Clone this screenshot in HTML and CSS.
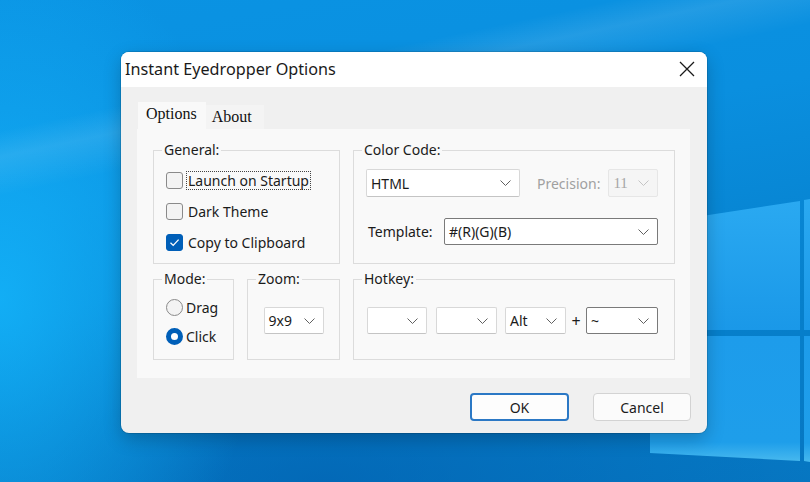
FILE: index.html
```html
<!DOCTYPE html>
<html lang="en">
<head>
    <meta charset="UTF-8">
    <title>Instant Eyedropper Options</title>
    <link rel="stylesheet" href="styles.css">
</head>
<body>
    <div class="desktop">
        <!-- wallpaper logo panes -->
        <svg class="wallpaper-logo" width="810" height="482" viewBox="0 0 810 482">
            <defs>
                <linearGradient id="pane" x1="0" y1="0" x2="0" y2="1">
                    <stop offset="0" stop-color="#2aa9f1"/>
                    <stop offset="1" stop-color="#1a98e8"/>
                </linearGradient>
                <linearGradient id="paneLow" x1="0" y1="0" x2="0" y2="1">
                    <stop offset="0" stop-color="#1d9ceb"/>
                    <stop offset="0.85" stop-color="#1e9eea"/>
                    <stop offset="1" stop-color="#46b8ee"/>
                </linearGradient>
            </defs>
            <polygon points="650,224 800,201 800,330 650,330" fill="url(#pane)"/>
            <polygon points="804,200 810,199 810,330 804,330" fill="url(#pane)"/>
            <polygon points="650,336 800,336 800,461 650,453" fill="url(#paneLow)"/>
            <polygon points="804,336 810,336 810,462 804,461" fill="url(#paneLow)"/>
        </svg>

        <div class="dialog">
            <div class="titlebar">
                <span class="title">Instant Eyedropper Options</span>
                <span class="close">
                    <svg width="16" height="16" viewBox="0 0 16 16">
                        <path d="M1 1 L15 15 M15 1 L1 15" stroke="#1a1a1a" stroke-width="1.3" fill="none"/>
                    </svg>
                </span>
            </div>

            <div class="dialog-body">
                <div class="tabs">
                    <div class="tab active">Options</div>
                    <div class="tab">About</div>
                </div>

                <div class="tab-panel">
                    <fieldset class="group general">
                        <legend>General:</legend>
                        <div class="group-content checks">
                            <div class="check-row">
                                <span class="checkbox"></span>
                                <span class="check-label focused">Launch on Startup</span>
                            </div>
                            <div class="check-row">
                                <span class="checkbox"></span>
                                <span class="check-label">Dark Theme</span>
                            </div>
                            <div class="check-row">
                                <span class="checkbox checked">
                                    <svg width="11" height="11" viewBox="0 0 11 11">
                                        <path d="M1.5 5.8 L4.2 8.4 L9.6 2.6" stroke="#fff" stroke-width="1.3" fill="none"/>
                                    </svg>
                                </span>
                                <span class="check-label">Copy to Clipboard</span>
                            </div>
                        </div>
                    </fieldset>

                    <fieldset class="group color-code">
                        <legend>Color Code:</legend>
                        <div class="group-content">
                            <div class="field-row">
                                <div class="select code-select">
                                    <span>HTML</span>
                                    <svg class="chevron" width="11" height="6" viewBox="0 0 11 6"><path d="M0.5 0.5 L5.5 5.5 L10.5 0.5" stroke="#606060" fill="none"/></svg>
                                </div>
                                <span class="muted precision-label">Precision:</span>
                                <div class="select disabled precision-select">
                                    <span>11</span>
                                    <svg class="chevron" width="11" height="6" viewBox="0 0 11 6"><path d="M0.5 0.5 L5.5 5.5 L10.5 0.5" stroke="#c4c4c4" fill="none"/></svg>
                                </div>
                            </div>
                            <div class="field-row template-row">
                                <span class="template-label">Template:</span>
                                <div class="select editable template-select">
                                    <span>#(R)(G)(B)</span>
                                    <svg class="chevron" width="11" height="6" viewBox="0 0 11 6"><path d="M0.5 0.5 L5.5 5.5 L10.5 0.5" stroke="#606060" fill="none"/></svg>
                                </div>
                            </div>
                        </div>
                    </fieldset>

                    <fieldset class="group mode">
                        <legend>Mode:</legend>
                        <div class="group-content radios">
                            <div class="radio-row">
                                <span class="radio"></span>
                                <span>Drag</span>
                            </div>
                            <div class="radio-row">
                                <span class="radio checked"></span>
                                <span>Click</span>
                            </div>
                        </div>
                    </fieldset>

                    <fieldset class="group zoom">
                        <legend>Zoom:</legend>
                        <div class="group-content zoom-content">
                            <div class="select small zoom-select">
                                <span>9x9</span>
                                <svg class="chevron" width="11" height="6" viewBox="0 0 11 6"><path d="M0.5 0.5 L5.5 5.5 L10.5 0.5" stroke="#606060" fill="none"/></svg>
                            </div>
                        </div>
                    </fieldset>

                    <fieldset class="group hotkey">
                        <legend>Hotkey:</legend>
                        <div class="group-content hotkey-row">
                            <div class="select small key-a">
                                <span></span>
                                <svg class="chevron" width="11" height="6" viewBox="0 0 11 6"><path d="M0.5 0.5 L5.5 5.5 L10.5 0.5" stroke="#606060" fill="none"/></svg>
                            </div>
                            <div class="select small key-b">
                                <span></span>
                                <svg class="chevron" width="11" height="6" viewBox="0 0 11 6"><path d="M0.5 0.5 L5.5 5.5 L10.5 0.5" stroke="#606060" fill="none"/></svg>
                            </div>
                            <div class="select small key-c">
                                <span>Alt</span>
                                <svg class="chevron" width="11" height="6" viewBox="0 0 11 6"><path d="M0.5 0.5 L5.5 5.5 L10.5 0.5" stroke="#606060" fill="none"/></svg>
                            </div>
                            <span class="plus">+</span>
                            <div class="select small editable key-d">
                                <span>~</span>
                                <svg class="chevron" width="11" height="6" viewBox="0 0 11 6"><path d="M0.5 0.5 L5.5 5.5 L10.5 0.5" stroke="#606060" fill="none"/></svg>
                            </div>
                        </div>
                    </fieldset>
                </div>

                <div class="buttons">
                    <button class="btn default">OK</button>
                    <button class="btn">Cancel</button>
                </div>
            </div>
        </div>
    </div>
</body>
</html>
```

FILE: styles.css
```css
html, body {
    margin: 0;
    padding: 0;
}
body {
    width: 810px;
    height: 482px;
    overflow: hidden;
    font-family: "Noto Sans", "Open Sans", sans-serif;
    font-size: 14px;
    color: #1b1b1b;
}
.desktop {
    position: relative;
    width: 810px;
    height: 482px;
    background:
        linear-gradient(168deg, transparent 0%, transparent 20%, rgba(255,255,255,0.10) 24%, transparent 30%),
        radial-gradient(ellipse 260px 360px at 0% 62%, rgba(20,180,250,0.85) 0%, rgba(20,180,250,0) 100%),
        radial-gradient(ellipse 520px 200px at 40% 100%, rgba(0,90,170,0.55) 0%, rgba(0,90,170,0) 100%),
        linear-gradient(170deg, #0a93e3 0%, #0a8fdf 35%, #0680cc 70%, #0677c2 100%);
}
.wallpaper-logo {
    position: absolute;
    left: 0;
    top: 0;
}

/* dialog window */
.dialog {
    position: absolute;
    left: 121px;
    top: 52px;
    width: 586px;
    height: 381px;
    background: #f0f0f0;
    border-radius: 8px;
    overflow: hidden;
    box-shadow: 0 0 0 1px rgba(0,0,0,0.12), 0 6px 18px rgba(0,0,0,0.22);
    display: flex;
    flex-direction: column;
}
.titlebar {
    height: 35px;
    background: #ffffff;
    display: flex;
    align-items: center;
    justify-content: space-between;
    padding: 0 12px 0 4px;
    flex-shrink: 0;
}
.title {
    font-size: 16.2px;
    color: #1a1a1a;
    margin-top: -2px;
}
.close {
    display: flex;
    margin-top: -1px;
}
.dialog-body {
    padding: 15px 17px 12px 16px;
    display: flex;
    flex-direction: column;
}

/* tabs */
.tabs {
    display: flex;
    align-items: flex-end;
    height: 27px;
    padding-left: 1px;
}
.tab {
    font-family: "Liberation Serif", serif;
    font-size: 16px;
    color: #111;
    background: #f4f4f4;
    height: 24px;
    line-height: 24px;
    padding: 0 12px 0 6px;
}
.tab.active {
    background: #f9f9f9;
    height: 27px;
    line-height: 24px;
    padding: 0 9px 0 8px;
}
.tab-panel {
    background: #f9f9f9;
    height: 249px;
    box-sizing: border-box;
    padding: 12px 15px 0 16px;
    display: grid;
    grid-template-columns: 81px 93px 322px;
    grid-template-rows: 123px 90px;
    column-gap: 13px;
    row-gap: 6px;
}

/* group boxes */
.group {
    margin: 0;
    padding: 0;
    min-width: 0;
    border: 1px solid #dcdcdc;
}
.group legend {
    margin-left: 8px;
    padding: 0 2px;
    line-height: 18px;
    color: #1b1b1b;
}
.general { grid-column: 1 / 3; }
.color-code { grid-column: 3; }
.mode { grid-column: 1; }
.zoom { grid-column: 2; }
.hotkey { grid-column: 3; }

.checks {
    padding: 11px 0 0 12px;
    display: flex;
    flex-direction: column;
    gap: 11px;
}
.check-row, .radio-row {
    display: flex;
    align-items: center;
    height: 20px;
}
.checkbox {
    width: 15px;
    height: 15px;
    border: 1px solid #8a8a8a;
    border-radius: 3px;
    background: #f3f3f3;
    display: flex;
    align-items: center;
    justify-content: center;
}
.checkbox.checked {
    background: #005fb8;
    border-color: #005fb8;
}
.check-label {
    margin-left: 3px;
    padding: 0 1px;
    border: 1px dotted transparent;
    line-height: 17px;
}
.check-label.focused {
    border-color: #444;
}

.radios {
    padding: 9px 0 0 12px;
    display: flex;
    flex-direction: column;
    gap: 9px;
}
.radio {
    width: 15px;
    height: 15px;
    border: 1px solid #8a8a8a;
    border-radius: 50%;
    background: #f3f3f3;
    margin-right: 3px;
    box-sizing: content-box;
}
.radio.checked {
    width: 7px;
    height: 7px;
    border: 5px solid #005fb8;
    background: #ffffff;
}

/* combo boxes */
.select {
    height: 28px;
    box-sizing: border-box;
    background: #ffffff;
    border: 1px solid #d8d8d8;
    border-bottom-color: #c4c4c4;
    border-radius: 2px;
    display: flex;
    align-items: center;
    justify-content: space-between;
    padding: 0 8px 0 4px;
}
.select.small {
    height: 27px;
}
.select.editable {
    border-color: #7a7a7a;
}
.select.disabled {
    background: #f5f5f5;
    border-color: #e6e6e6;
    color: #a6a6a6;
}
.muted {
    color: #a0a0a0;
}

.color-code .group-content {
    padding: 10px 0 0 12px;
}
.field-row {
    display: flex;
    align-items: center;
}
.code-select {
    width: 154px;
}
.precision-label {
    margin-left: 17px;
}
.precision-select {
    width: 50px;
    margin-left: 8px;
    font-family: "Liberation Serif", serif;
    font-size: 15px;
}
.template-row {
    margin-top: 21px;
}
.template-label {
    margin-left: 2px;
    width: 76px;
}
.template-select {
    width: 214px;
    height: 27px;
}

.zoom-content {
    padding-top: 19px;
    display: flex;
    justify-content: center;
}
.zoom-select {
    width: 60px;
}

.hotkey-row {
    padding: 19px 0 0 13px;
    display: flex;
    align-items: center;
}
.key-a { width: 60px; }
.key-b { width: 61px; margin-left: 9px; }
.key-c { width: 61px; margin-left: 8px; }
.key-d { width: 72px; }
.plus {
    width: 20px;
    text-align: center;
    font-size: 16px;
}

/* dialog buttons */
.buttons {
    display: flex;
    justify-content: flex-end;
    gap: 24px;
    margin-top: 15px;
    margin-right: -1px;
}
.btn {
    width: 98px;
    height: 28px;
    font-family: inherit;
    font-size: 14px;
    color: #1b1b1b;
    background: #fbfbfb;
    border: 1px solid #d3d3d3;
    border-radius: 4px;
    padding: 0;
}
.btn.default {
    width: 99px;
    background: #fdfdfd;
    border: 2px solid #2b78c5;
}
```
